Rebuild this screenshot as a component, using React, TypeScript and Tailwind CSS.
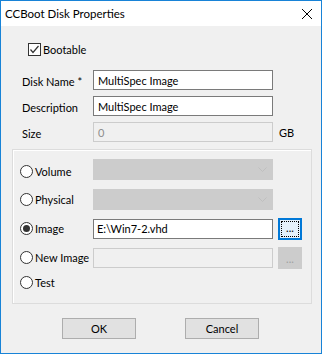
import React from "react";

function Radio({ checked }: { checked?: boolean }) {
  return (
    <div className="w-[13px] h-[13px] rounded-full border border-[#333333] bg-white flex items-center justify-center shrink-0">
      {checked && <div className="w-[7px] h-[7px] rounded-full bg-[#333333]" />}
    </div>
  );
}

function Combo() {
  return (
    <div className="w-[180px] h-[21px] bg-[#cccccc] flex items-center justify-end pr-[6px]">
      <svg width="9" height="5" viewBox="0 0 9 5">
        <path d="M0.5 0.5 L4.5 4.5 L8.5 0.5" fill="none" stroke="#bfbfbf" strokeWidth="1" />
      </svg>
    </div>
  );
}

export default function App() {
  return (
    <div className="w-[322px] h-[354px] border border-[#1883d7] bg-[#f0f0f0] flex flex-col text-[11px] leading-none text-black font-[family-name:Lato,sans-serif]">
      <div className="h-[25px] bg-white flex items-center justify-between pl-[4px] pr-[9px] shrink-0">
        <span className="text-[11.5px]">CCBoot Disk Properties</span>
        <svg width="10" height="10" viewBox="0 0 10 10">
          <path d="M0 0 L10 10 M10 0 L0 10" stroke="#000" strokeWidth="1" />
        </svg>
      </div>
      <div className="flex flex-col">
        <div className="mt-[17px] ml-[27px] flex items-center h-[13px] gap-[2px]">
          <div className="w-[13px] h-[13px] border border-[#333333] bg-white flex items-center justify-center">
            <svg width="11" height="11" viewBox="0 0 11 11">
              <path d="M1.5 5.5 L4 8.5 L9.5 2" fill="none" stroke="#333" strokeWidth="1.2" />
            </svg>
          </div>
          <span>Bootable</span>
        </div>

        <div className="mt-[14px] ml-[21px] flex flex-col gap-[6px]">
          <div className="flex items-center h-[20px]">
            <span className="w-[71px] pt-[3px]">Disk Name *</span>
            <div className="w-[180px] h-[20px] border border-[#7a7a7a] bg-white flex items-center pl-[4px]">
              MultiSpec Image
            </div>
          </div>
          <div className="flex items-center h-[20px]">
            <span className="w-[71px] pt-[3px]">Description</span>
            <div className="w-[180px] h-[20px] border border-[#7a7a7a] bg-white flex items-center pl-[4px]">
              MultiSpec Image
            </div>
          </div>
          <div className="flex items-center h-[20px]">
            <span className="w-[71px] pt-[3px]">Size</span>
            <div className="w-[180px] h-[20px] border border-[#cccccc] bg-[#f0f0f0] flex items-center pl-[4px] text-[#8d8d8d]">
              0
            </div>
            <span className="ml-[6px] pt-[1px]">GB</span>
          </div>
        </div>

        <div className="mt-[7px] ml-[11px] w-[300px] h-[155px] border border-[#dcdcdc] shadow-[inset_1px_1px_0_#ffffff] flex flex-col pl-[7px] pt-[9px]">
          <div className="flex items-center h-[21px]">
            <div className="w-[73px] flex items-center gap-[2px] pt-[3px]">
              <Radio />
              <span>Volume</span>
            </div>
            <Combo />
          </div>
          <div className="flex items-center h-[21px] mt-[9px]">
            <div className="w-[73px] flex items-center gap-[2px]">
              <Radio />
              <span>Physical</span>
            </div>
            <Combo />
          </div>
          <div className="flex items-center h-[21px] mt-[8px]">
            <div className="w-[73px] flex items-center gap-[2px]">
              <Radio checked />
              <span>Image</span>
            </div>
            <div className="w-[180px] h-[20px] border border-[#7a7a7a] bg-white flex items-center pl-[3px]">
              E:\Win7-2.vhd
            </div>
            <div className="ml-[5px] w-[24px] h-[22px] border-2 border-[#0078d7] bg-[#e5f1fb] flex items-center justify-center">
              <div className="w-[18px] h-[16px] border border-dotted border-black flex items-end justify-center pb-[3px] text-[11px] leading-none">
                ...
              </div>
            </div>
          </div>
          <div className="flex items-center h-[21px] mt-[8px]">
            <div className="w-[73px] flex items-center gap-[2px]">
              <Radio />
              <span className="whitespace-nowrap">New Image</span>
            </div>
            <div className="w-[180px] h-[20px] border border-[#cccccc] bg-[#f0f0f0]" />
            <div className="ml-[5px] w-[24px] h-[22px] bg-[#cccccc] flex items-end justify-center pb-[5px] text-[11px] leading-none text-[#a0a0a0]">
              ...
            </div>
          </div>
          <div className="flex items-center h-[21px] mt-[4px]">
            <div className="w-[73px] flex items-center gap-[2px]">
              <Radio />
              <span>Test</span>
            </div>
          </div>
        </div>

        <div className="mt-[14px] ml-[61px] flex gap-[49px]">
          <div className="w-[74px] h-[21px] border border-[#adadad] bg-[#e1e1e1] flex items-center justify-center">OK</div>
          <div className="w-[74px] h-[21px] border border-[#adadad] bg-[#e1e1e1] flex items-center justify-center">Cancel</div>
        </div>
      </div>
    </div>
  );
}
